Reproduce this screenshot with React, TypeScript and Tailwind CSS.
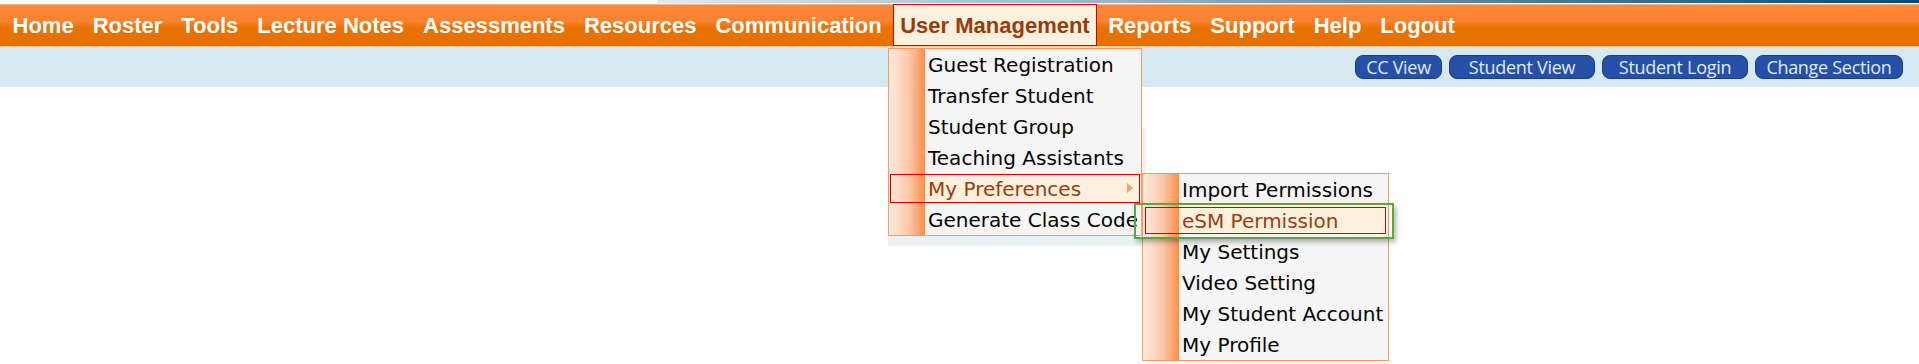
import React from "react";

const navItems = [
  "Home",
  "Roster",
  "Tools",
  "Lecture Notes",
  "Assessments",
  "Resources",
  "Communication",
  "User Management",
  "Reports",
  "Support",
  "Help",
  "Logout",
];

type Row = { label: string; active?: boolean; arrow?: boolean };

function Menu({
  rows,
  className,
  activeInset,
}: {
  rows: Row[];
  className: string;
  activeInset: string;
}) {
  return (
    <div
      className={
        "absolute border border-[#f99a58] bg-[#f5f5f5] font-['DejaVu_Sans',sans-serif] text-[20px] " +
        className
      }
    >
      {rows.map((r) => (
        <div key={r.label} className="relative flex h-[31px]">
          <div className="w-[36px] shrink-0 bg-[linear-gradient(to_right,#fdebe0,#fcc9a8_55%,#fb8d47)]" />
          <div
            className={
              "flex flex-1 items-center whitespace-nowrap pl-[3px] overflow-hidden " +
              (r.active ? "bg-[#fdf1dd] text-[#9c3d0e]" : "text-[#050505]")
            }
          >
            {r.label}
          </div>
          {r.arrow && (
            <div className="absolute right-[8px] top-[10px] h-0 w-0 border-y-[5px] border-l-[6px] border-y-transparent border-l-[#f4a173]" />
          )}
          {r.active && (
            <div
              className={"pointer-events-none absolute border border-[#d40000] " + activeInset}
            />
          )}
        </div>
      ))}
    </div>
  );
}

export default function App() {
  return (
    <div className="relative h-[364px] w-[1919px] overflow-hidden bg-white">
      {/* top strip */}
      <div className="flex h-[3px]">
        <div className="w-[657px] bg-[#fbfbfb]" />
        <div className="flex-1 bg-[linear-gradient(to_right,#dfe8ed,#9bb6c6_35%,#4a7b99_70%,#0a4a72)]" />
      </div>
      <div className="h-[1px] bg-[#f4f4f4]" />
      {/* orange nav */}
      <div className="flex h-[42px] items-stretch border-t border-[#fdb27a] bg-[linear-gradient(to_bottom,#fd8838,#f98230_40%,#e97300_55%,#e67000)] pl-[3px] font-['Liberation_Sans',Arial,sans-serif] text-[22px] font-bold">
        {navItems.map((n) =>
          n === "User Management" ? (
            <div
              key={n}
              className="mx-[2px] -mt-[1px] flex items-center border border-[#d40000] bg-[#fdf1dd] px-[6px] text-[#9a3b0c]"
            >
              {n}
            </div>
          ) : (
            <div key={n} className="flex items-center whitespace-nowrap px-[9.5px] text-white">
              {n}
            </div>
          )
        )}
      </div>
      <div className="h-[1px] bg-[#f6c9a4]" />
      {/* light blue bar */}
      <div className="flex h-[40px] items-center justify-end gap-[7px] bg-[#d7e9f0] pr-[16px] font-['Open_Sans',sans-serif] text-[18px] text-[#e2e8f4]">
        {[
          ["CC View", "w-[87px]"],
          ["Student View", "w-[146px]"],
          ["Student Login", "w-[146px]"],
          ["Change Section", "w-[148px]"],
        ].map(([t, w]) => (
          <div
            key={t}
            className={
              "flex h-[24px] items-center justify-center whitespace-nowrap rounded-[8px] border border-[#1b3e88] bg-[#2451a7] leading-none tracking-[-0.3px] " +
              w
            }
          >
            {t}
          </div>
        ))}
      </div>

      {/* shadow panel behind first menu */}
      <div className="absolute left-[888px] top-[128px] h-[118px] w-[258px] bg-[#eef1f3]" />

      <Menu
        className="left-[888px] top-[48px] w-[254px]"
        activeInset="inset-x-[1px] inset-y-[1px]"
        rows={[
          { label: "Guest Registration" },
          { label: "Transfer Student" },
          { label: "Student Group" },
          { label: "Teaching Assistants" },
          { label: "My Preferences", active: true, arrow: true },
          { label: "Generate Class Code" },
        ]}
      />

      <Menu
        className="left-[1142px] top-[173px] w-[247px]"
        activeInset="inset-[2px]"
        rows={[
          { label: "Import Permissions" },
          { label: "eSM Permission", active: true },
          { label: "My Settings" },
          { label: "Video Setting" },
          { label: "My Student Account" },
          { label: "My Profile" },
        ]}
      />

      {/* green focus box */}
      <div className="pointer-events-none absolute left-[1134px] top-[203px] h-[36px] w-[260px] border-2 border-[#62a43c] shadow-[2px_3px_5px_rgba(0,0,0,0.3)]" />
    </div>
  );
}
